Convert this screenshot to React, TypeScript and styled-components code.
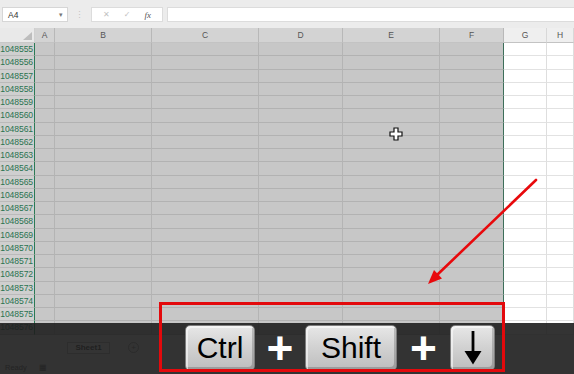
import React from 'react';
import styled, { createGlobalStyle } from 'styled-components';

const GlobalStyle = createGlobalStyle`
  html, body { margin: 0; padding: 0; background: #fff; }
  body { width: 574px; height: 374px; overflow: hidden; font-family: "Liberation Sans", Arial, sans-serif; }
`;

const COLS = '35px 20px 97px 107px 84px 97px 64px 43px 1fr';

const Screen = styled.div`
  position: relative;
  width: 574px;
  height: 374px;
  overflow: hidden;
  background: #ececec;
  display: flex;
  flex-direction: column;
`;

const FormulaBar = styled.div`
  height: 28px;
  box-sizing: border-box;
  padding: 7px 0 6px 2px;
  display: flex;
  align-items: stretch;
  background: #ececec;
  flex-shrink: 0;
`;

const NameBox = styled.div`
  width: 66px;
  box-sizing: border-box;
  background: #fff;
  border: 1px solid #d6d6d6;
  display: flex;
  align-items: center;
  justify-content: space-between;
  padding: 0 4px 0 5px;
  font-size: 8.5px;
  color: #333;
`;

const Caret = styled.span`
  font-size: 7px;
  color: #777;
`;

const Separator = styled.div`
  width: 23px;
  display: flex;
  align-items: center;
  justify-content: center;
  color: #c4c4c4;
  font-size: 9px;
`;

const FxGroup = styled.div`
  width: 72px;
  box-sizing: border-box;
  background: #fff;
  border: 1px solid #dcdcdc;
  display: flex;
  align-items: center;
  justify-content: space-around;
  padding: 0 4px;
  margin-right: 4px;
`;

const FxIcon = styled.span<{ $dark?: boolean }>`
  font-family: ${(p) => (p.$dark ? '"Liberation Serif", serif' : '"DejaVu Sans", sans-serif')};
  font-style: ${(p) => (p.$dark ? 'italic' : 'normal')};
  font-size: ${(p) => (p.$dark ? '9px' : '8px')};
  color: ${(p) => (p.$dark ? '#555' : '#c2c2c2')};
`;

const FormulaInput = styled.div`
  flex: 1;
  background: #fff;
  border: 1px solid #dcdcdc;
  border-right: none;
`;

const Sheet = styled.div`
  display: flex;
  flex-direction: column;
  flex-shrink: 0;
`;

const Row = styled.div<{ $h: number }>`
  display: grid;
  grid-template-columns: ${COLS};
  height: ${(p) => p.$h}px;
`;

const Corner = styled.div`
  background: #e9e9e9;
  border-right: 1px solid #cfcfcf;
  border-bottom: 1px solid #c8c8c8;
  display: flex;
  align-items: flex-end;
  justify-content: flex-end;
  padding: 0 2px 2px 0;
`;

const CornerTriangle = styled.span`
  width: 9px;
  height: 8px;
  background: #bdbdbd;
  clip-path: polygon(100% 0, 100% 100%, 0 100%);
`;

const ColHead = styled.div<{ $sel: boolean }>`
  background: ${(p) => (p.$sel ? '#d3d3d3' : '#efefef')};
  border-right: 1px solid ${(p) => (p.$sel ? '#b8b8b8' : '#d8d8d8')};
  border-bottom: 1px solid #c3c3c3;
  display: flex;
  align-items: center;
  justify-content: center;
  font-size: 8.5px;
  color: #555555;
`;

const RowHead = styled.div`
  background: #cfcfcf;
  border-right: 1.5px solid #2b7a55;
  border-bottom: 1px solid #bababa;
  display: flex;
  align-items: center;
  justify-content: flex-end;
  padding-right: 1px;
  font-size: 8.6px;
  color: #2a7350;
  letter-spacing: -0.1px;
  overflow: hidden;
  white-space: nowrap;
`;

const Cell = styled.div<{ $sel: boolean; $edge?: boolean }>`
  background: ${(p) => (p.$sel ? '#c7c7c7' : '#ffffff')};
  border-right: ${(p) =>
    p.$edge ? '1.5px solid #3d6f5a' : `1px solid ${p.$sel ? '#b4b4b4' : '#dedede'}`};
  border-bottom: 1px solid ${(p) => (p.$sel ? '#b2b2b2' : '#e2e2e2')};
`;

const TabBar = styled.div`
  flex: 1;
  background: #f0f0f0;
  display: flex;
  align-items: center;
  padding-left: 67px;
  gap: 18px;
`;

const SheetTab = styled.div`
  width: 43px;
  height: 12px;
  box-sizing: border-box;
  background: #fff;
  border: 1px solid #bbb;
  font-size: 8px;
  font-weight: bold;
  color: #333;
  display: flex;
  align-items: center;
  justify-content: center;
`;

const AddSheet = styled.div`
  width: 9px;
  height: 9px;
  border-radius: 50%;
  border: 1px solid #999;
  font-size: 8px;
  color: #777;
  display: flex;
  align-items: center;
  justify-content: center;
`;

const StatusBar = styled.div`
  height: 13px;
  background: #f0f0f0;
  display: flex;
  align-items: center;
  padding-left: 5px;
  gap: 12px;
  font-size: 7.5px;
  color: #555;
`;

const KeyOverlay = styled.div`
  position: absolute;
  left: 0;
  right: 0;
  top: 323px;
  bottom: 0;
  background: rgba(30, 30, 30, 0.9);
  display: flex;
  align-items: flex-start;
  padding: 2px 0 0 185px;
  box-sizing: border-box;
`;

const Key = styled.div<{ $w: number }>`
  width: ${(p) => p.$w}px;
  height: 46px;
  box-sizing: border-box;
  border-radius: 5px;
  border: 1px solid #7d7d7d;
  background: linear-gradient(180deg, #e7e7e7 0%, #d3d3d3 45%, #bdbdbd 100%);
  box-shadow: inset 2px 2px 0 rgba(255, 255, 255, 0.55), inset -2px -3px 0 rgba(0, 0, 0, 0.18);
  display: flex;
  align-items: center;
  justify-content: center;
  font-family: "Liberation Sans", Arial, sans-serif;
  font-size: 30px;
  color: #000;
  line-height: 1;
`;

const Plus = styled.div<{ $w: number }>`
  width: ${(p) => p.$w}px;
  height: 46px;
  padding-top: 1px;
  box-sizing: border-box;
  text-align: center;
  line-height: 44px;
  font-family: "Liberation Sans", Arial, sans-serif;
  font-weight: bold;
  font-size: 46px;
  color: #fff;
`;

const RedFrame = styled.div`
  position: absolute;
  left: 159px;
  top: 302px;
  width: 346px;
  height: 70px;
  box-sizing: border-box;
  border: 3px solid #e3090c;
  pointer-events: none;
`;

const Annotation = styled.svg`
  position: absolute;
  left: 0;
  top: 0;
  pointer-events: none;
`;

const rows = Array.from({ length: 22 }, (_, i) => 1048555 + i);
const colLetters = ['A', 'B', 'C', 'D', 'E', 'F', 'G', 'H'];

export default function App() {
  return (
    <>
      <GlobalStyle />
      <Screen>
        <FormulaBar>
          <NameBox>
            <span>A4</span>
            <Caret>▾</Caret>
          </NameBox>
          <Separator>⋮</Separator>
          <FxGroup>
            <FxIcon>✕</FxIcon>
            <FxIcon>✓</FxIcon>
            <FxIcon $dark>fx</FxIcon>
          </FxGroup>
          <FormulaInput />
        </FormulaBar>
        <Sheet>
          <Row $h={15}>
            <Corner>
              <CornerTriangle />
            </Corner>
            {colLetters.map((c, i) => (
              <ColHead key={c} $sel={i < 6}>
                {c}
              </ColHead>
            ))}
          </Row>
          {rows.map((r) => (
            <Row key={r} $h={13.25}>
              <RowHead>{r}</RowHead>
              {colLetters.map((c, i) => (
                <Cell key={c} $sel={i < 6} $edge={i === 5} />
              ))}
            </Row>
          ))}
        </Sheet>
        <TabBar>
          <SheetTab>Sheet1</SheetTab>
          <AddSheet>+</AddSheet>
        </TabBar>
        <StatusBar>
          <span>Ready</span>
          <span>▦</span>
        </StatusBar>

        <Annotation width="574" height="374" viewBox="0 0 574 374">
          <g transform="translate(396 134)">
            <path
              d="M-2 -6 H2 V-2 H6 V2 H2 V6 H-2 V2 H-6 V-2 H-2 Z"
              fill="#fff"
              stroke="#111"
              strokeWidth="1.2"
            />
          </g>
          <line x1="536" y1="180" x2="437" y2="275" stroke="#e8090c" strokeWidth="2.6" strokeLinecap="round" />
          <polygon points="428,284 442,278.5 434,270" fill="#e8090c" />
        </Annotation>

        <KeyOverlay>
          <Key $w={70}>Ctrl</Key>
          <Plus $w={50}>+</Plus>
          <Key $w={92}>Shift</Key>
          <Plus $w={53}>+</Plus>
          <Key $w={45}>
            <svg width="18" height="34" viewBox="0 0 18 34">
              <rect x="7.6" y="0" width="2.8" height="22" fill="#000" />
              <polygon points="0.5,20 17.5,20 9,33.5" fill="#000" />
            </svg>
          </Key>
        </KeyOverlay>
        <RedFrame />
      </Screen>
    </>
  );
}
